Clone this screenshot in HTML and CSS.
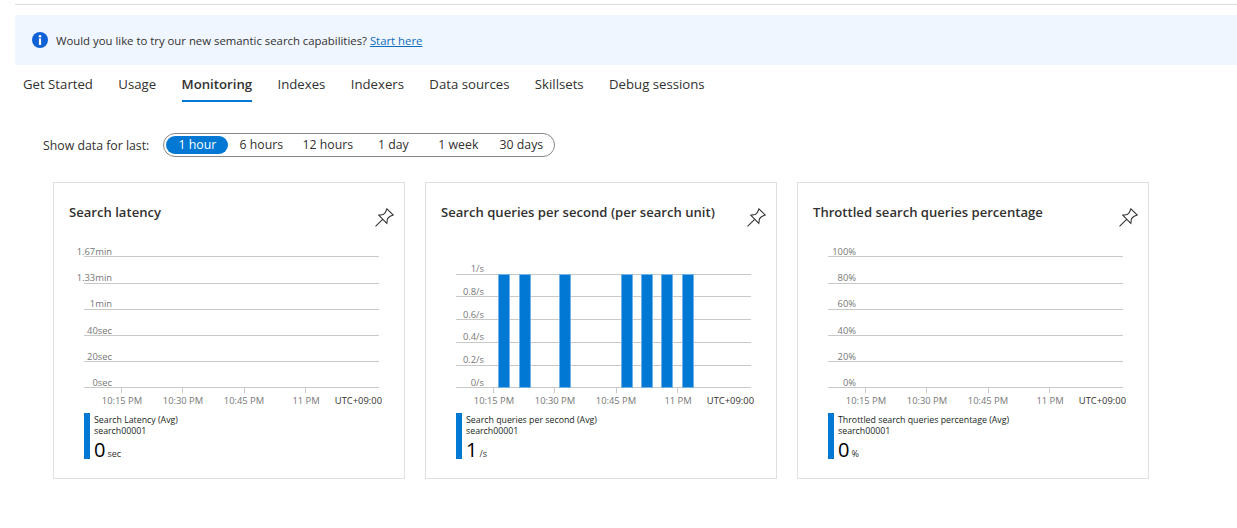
FILE: index.html
```html
<!DOCTYPE html>
<html lang="en">
<head>
  <meta charset="UTF-8">
  <title>Monitoring</title>
  <link rel="stylesheet" href="styles.css">
</head>
<body>
  <div class="topline"></div>

  <div class="banner">
    <svg class="info" width="16" height="16" viewBox="0 0 16 16">
      <circle cx="8" cy="8" r="8" fill="#0f62d6"/>
      <circle cx="8" cy="4.2" r="1.3" fill="#fff"/>
      <rect x="6.9" y="6.4" width="2.2" height="6.6" fill="#fff"/>
    </svg>
    <span>Would you like to try our new semantic search capabilities? <a href="#">Start here</a></span>
  </div>

  <nav class="tabs">
    <a href="#">Get Started</a>
    <a href="#">Usage</a>
    <a href="#" class="active">Monitoring</a>
    <a href="#">Indexes</a>
    <a href="#">Indexers</a>
    <a href="#">Data sources</a>
    <a href="#">Skillsets</a>
    <a href="#">Debug sessions</a>
  </nav>

  <div class="range">
    <span class="range-label">Show data for last:</span>
    <div class="pill">
      <span class="selected">1 hour</span>
      <span>6 hours</span>
      <span>12 hours</span>
      <span>1 day</span>
      <span>1 week</span>
      <span>30 days</span>
    </div>
  </div>

  <div class="cards">
    <section class="card">
      <header class="card-head">
        <h3>Search latency</h3>
        <svg class="pin" width="19" height="19" viewBox="0 0 18 18"><path d="M11.3.8l6 5.9-3.4 1.4-2.1 2.1-.6 4.3-7.7-7.7 4.3-.6 2.1-2.1zM.5 17.5L7 11"/></svg>
      </header>
      <svg class="chart" width="350" height="166" viewBox="0 0 350 166">
        <g class="grid">
          <path d="M30 15.5H325M30 42.5H325M30 68.5H325M30 94.5H325M30 120.5H325M30 146.5H325"/>
          <path d="M67.5 146.5V152M128.5 146.5V152M190.5 146.5V152M251.5 146.5V152"/>
        </g>
        <g class="ylabels">
          <text x="58" y="14">1.67min</text>
          <text x="58" y="40">1.33min</text>
          <text x="58" y="66">1min</text>
          <text x="58" y="93">40sec</text>
          <text x="58" y="119">20sec</text>
          <text x="58" y="145">0sec</text>
        </g>
        <g class="xlabels">
          <text x="68" y="163">10:15 PM</text>
          <text x="129" y="163">10:30 PM</text>
          <text x="190" y="163">10:45 PM</text>
          <text x="252" y="163">11 PM</text>
        </g>
        <text class="tz" x="328" y="163">UTC+09:00</text>
      </svg>
      <div class="legend">
        <div class="legend-bar"></div>
        <div class="legend-text">
          <div>Search Latency (Avg)</div>
          <div>search00001</div>
          <div class="value">0<small>sec</small></div>
        </div>
      </div>
    </section>

    <section class="card">
      <header class="card-head">
        <h3>Search queries per second (per search unit)</h3>
        <svg class="pin" width="19" height="19" viewBox="0 0 18 18"><path d="M11.3.8l6 5.9-3.4 1.4-2.1 2.1-.6 4.3-7.7-7.7 4.3-.6 2.1-2.1zM.5 17.5L7 11"/></svg>
      </header>
      <svg class="chart" width="350" height="166" viewBox="0 0 350 166">
        <g class="grid">
          <path d="M30 33.5H325M30 55.5H325M30 78.5H325M30 101.5H325M30 124.5H325M30 146.5H325"/>
          <path d="M67.5 146.5V152M128.5 146.5V152M190.5 146.5V152M251.5 146.5V152"/>
        </g>
        <g class="bars">
          <rect x="72.5" y="33.5" width="11" height="113"/>
          <rect x="93.5" y="33.5" width="11" height="113"/>
          <rect x="133.5" y="33.5" width="11" height="113"/>
          <rect x="195.5" y="33.5" width="11" height="113"/>
          <rect x="215.5" y="33.5" width="11" height="113"/>
          <rect x="235.5" y="33.5" width="11" height="113"/>
          <rect x="256.5" y="33.5" width="11" height="113"/>
        </g>
        <g class="ylabels">
          <text x="58" y="31">1/s</text>
          <text x="58" y="54">0.8/s</text>
          <text x="58" y="77">0.6/s</text>
          <text x="58" y="99">0.4/s</text>
          <text x="58" y="122">0.2/s</text>
          <text x="58" y="145">0/s</text>
        </g>
        <g class="xlabels">
          <text x="68" y="163">10:15 PM</text>
          <text x="129" y="163">10:30 PM</text>
          <text x="190" y="163">10:45 PM</text>
          <text x="252" y="163">11 PM</text>
        </g>
        <text class="tz" x="328" y="163">UTC+09:00</text>
      </svg>
      <div class="legend">
        <div class="legend-bar"></div>
        <div class="legend-text">
          <div>Search queries per second (Avg)</div>
          <div>search00001</div>
          <div class="value">1<small>/s</small></div>
        </div>
      </div>
    </section>

    <section class="card">
      <header class="card-head">
        <h3>Throttled search queries percentage</h3>
        <svg class="pin" width="19" height="19" viewBox="0 0 18 18"><path d="M11.3.8l6 5.9-3.4 1.4-2.1 2.1-.6 4.3-7.7-7.7 4.3-.6 2.1-2.1zM.5 17.5L7 11"/></svg>
      </header>
      <svg class="chart" width="350" height="166" viewBox="0 0 350 166">
        <g class="grid">
          <path d="M30 15.5H325M30 42.5H325M30 68.5H325M30 94.5H325M30 120.5H325M30 146.5H325"/>
          <path d="M67.5 146.5V152M128.5 146.5V152M190.5 146.5V152M251.5 146.5V152"/>
        </g>
        <g class="ylabels">
          <text x="58" y="14">100%</text>
          <text x="58" y="40">80%</text>
          <text x="58" y="66">60%</text>
          <text x="58" y="93">40%</text>
          <text x="58" y="119">20%</text>
          <text x="58" y="145">0%</text>
        </g>
        <g class="xlabels">
          <text x="68" y="163">10:15 PM</text>
          <text x="129" y="163">10:30 PM</text>
          <text x="190" y="163">10:45 PM</text>
          <text x="252" y="163">11 PM</text>
        </g>
        <text class="tz" x="328" y="163">UTC+09:00</text>
      </svg>
      <div class="legend">
        <div class="legend-bar"></div>
        <div class="legend-text">
          <div>Throttled search queries percentage (Avg)</div>
          <div>search00001</div>
          <div class="value">0<small>%</small></div>
        </div>
      </div>
    </section>
  </div>
</body>
</html>
```

FILE: styles.css
```css
body {
  margin: 0;
  padding: 4px 0 0 15px;
  background: #ffffff;
  color: #323130;
  font-family: 'Open Sans', sans-serif;
  font-size: 12.3px;
  overflow: hidden;
}
a {
  text-decoration: none;
  color: inherit;
}
.topline {
  height: 1px;
  background: #dcdcdc;
}
.banner {
  display: flex;
  align-items: center;
  gap: 8px;
  height: 50px;
  margin-top: 10px;
  padding-left: 17px;
  background: #eff6ff;
  font-size: 11.35px;
}
.banner a {
  color: #0f6cbd;
  text-decoration: underline;
}
.tabs {
  display: flex;
  gap: 25.4px;
  margin-top: 7px;
  padding-left: 8px;
  font-size: 13.2px;
}
.tabs a {
  padding: 2px 0 6px;
  line-height: 20px;
  border-bottom: 2px solid transparent;
}
.tabs a.active {
  font-weight: 600;
  border-bottom-color: #0078d4;
}
.range {
  display: flex;
  align-items: center;
  gap: 14px;
  margin: 31px 0 0 28px;
}
.pill {
  display: grid;
  grid-template-columns: 62px 66px 67px 64px 66px 60px;
  align-items: center;
  width: 392px;
  height: 24px;
  padding: 2px;
  box-sizing: border-box;
  border: 1px solid #8a8886;
  border-radius: 12px;
  text-align: center;
}
.pill span {
  line-height: 18px;
}
.pill .selected {
  background: #0078d4;
  color: #ffffff;
  border-radius: 9px;
}
.cards {
  display: flex;
  gap: 20px;
  margin: 25px 0 0 38px;
}
.card {
  width: 352px;
  height: 297px;
  box-sizing: border-box;
  border: 1px solid #e0e0e0;
}
.card-head {
  display: flex;
  justify-content: space-between;
  height: 58px;
  padding: 20px 10px 0 15px;
  box-sizing: border-box;
}
.card-head h3 {
  margin: 0;
  font-size: 13.1px;
  font-weight: 600;
  line-height: 18px;
  color: #323130;
}
.pin {
  margin-top: 5px;
  fill: none;
  stroke: #323130;
  stroke-width: 1;
}
.chart {
  display: block;
  font-size: 9.4px;
}
.grid path {
  fill: none;
  stroke: #c8c8c8;
  stroke-width: 1;
}
.bars rect {
  fill: #0078d4;
  stroke: #6fb2e6;
  stroke-width: 1;
}
.ylabels text {
  text-anchor: end;
  fill: #777777;
}
.xlabels text {
  text-anchor: middle;
  fill: #777777;
}
.tz {
  text-anchor: end;
  fill: #323130;
}
.legend {
  display: flex;
  gap: 4px;
  margin: 6px 0 0 30px;
  font-size: 8.8px;
  line-height: 11px;
  color: #201f1e;
}
.legend-bar {
  width: 6px;
  height: 46px;
  background: #0078d4;
}
.legend-text {
  padding-top: 2px;
}
.value {
  margin-top: 2px;
  font-size: 20px;
  line-height: 22px;
  color: #000000;
}
.value small {
  margin-left: 2px;
  font-size: 9px;
  color: #323130;
}
```
